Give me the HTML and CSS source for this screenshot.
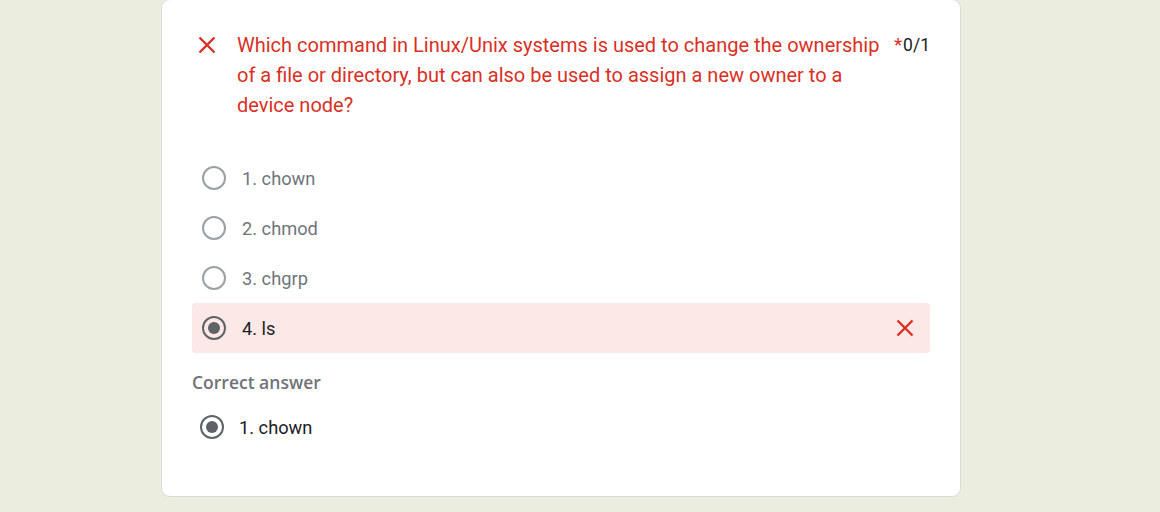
FILE: index.html
```html
<!DOCTYPE html>
<html lang="en">
<head>
<meta charset="utf-8">
<link rel="stylesheet" href="styles.css">
</head>
<body>
<div class="card">
  <div class="header">
    <svg class="hx" viewBox="0 0 18 18" width="18" height="18"><path d="M1.5 1.5 L16.5 16.5 M16.5 1.5 L1.5 16.5" stroke="#d93025" stroke-width="2.4" fill="none"/></svg>
    <div class="qtext">Which command in Linux/Unix systems is used to change the ownership of a file or directory, but can also be used to assign a new owner to a device node?</div>
    <div class="score"><span class="star">*</span>0/1</div>
  </div>
  <div class="options">
    <div class="opt"><span class="radio"></span><span class="label">1. chown</span></div>
    <div class="opt"><span class="radio"></span><span class="label">2. chmod</span></div>
    <div class="opt"><span class="radio"></span><span class="label">3. chgrp</span></div>
    <div class="opt wrong"><span class="radio checked"></span><span class="label">4. ls</span>
      <svg class="ox" viewBox="0 0 18 18" width="18" height="18"><path d="M1.5 1.5 L16.5 16.5 M16.5 1.5 L1.5 16.5" stroke="#d93025" stroke-width="2.4" fill="none"/></svg>
    </div>
  </div>
  <div class="correct-title">Correct answer</div>
  <div class="correct"><span class="radio checked"></span><span class="label">1. chown</span></div>
</div>
</body>
</html>
```
FILE: styles.css
```css
html, body { margin: 0; padding: 0; }
body {
  background: #ebeddf;
  font-family: Roboto, "Liberation Sans", sans-serif;
  height: 512px;
  overflow: hidden;
}
.card {
  box-sizing: border-box;
  width: 800px;
  margin: -1px 0 0 161px;
  height: 498px;
  background: #fff;
  border: 1px solid #dadce0;
  border-radius: 9px;
  padding: 0 30px;
}
.header {
  display: flex;
  align-items: flex-start;
  padding: 30px 0 0 6px;
  height: 150px;
  box-sizing: border-box;
}
.hx { flex: none; margin-top: 6px; }
.qtext {
  flex: none;
  color: #d93025;
  font-size: 20px;
  line-height: 30px;
  margin-left: 21px;
  width: 652px;
}
.score {
  margin-left: auto;
  font-size: 17.5px;
  line-height: 30px;
  color: #202124;
  white-space: nowrap;
}
.star { color: #d93025; margin-right: 1px; font-size: 19px; }
.options { margin-top: 3px; }
.opt {
  display: flex;
  align-items: center;
  height: 50px;
  padding-left: 10px;
  border-radius: 4px;
}
.radio {
  box-sizing: border-box;
  width: 24px;
  height: 24px;
  border: 2px solid #9aa0a6;
  border-radius: 50%;
  flex: none;
  display: flex;
  align-items: center;
  justify-content: center;
}
.radio.checked { border-color: #5f6368; }
.radio.checked::after {
  content: "";
  width: 12px;
  height: 12px;
  border-radius: 50%;
  background: #5f6368;
}
.label {
  margin-left: 16px;
  font-size: 18.25px;
  color: #70757a;
}
.opt.wrong { background: #fce8e6; }
.opt.wrong .label { color: #202124; }
.ox { margin-left: auto; margin-right: 16px; }
.correct-title {
  margin-top: 18px;
  font-family: "Open Sans", Roboto, sans-serif;
  font-weight: 600;
  font-size: 17.5px;
  color: #6f7377;
  line-height: 22px;
}
.correct {
  display: flex;
  align-items: center;
  height: 50px;
  padding-left: 8px;
  margin-top: 9px;
}
.correct .label { margin-left: 15px; color: #202124; }
```
